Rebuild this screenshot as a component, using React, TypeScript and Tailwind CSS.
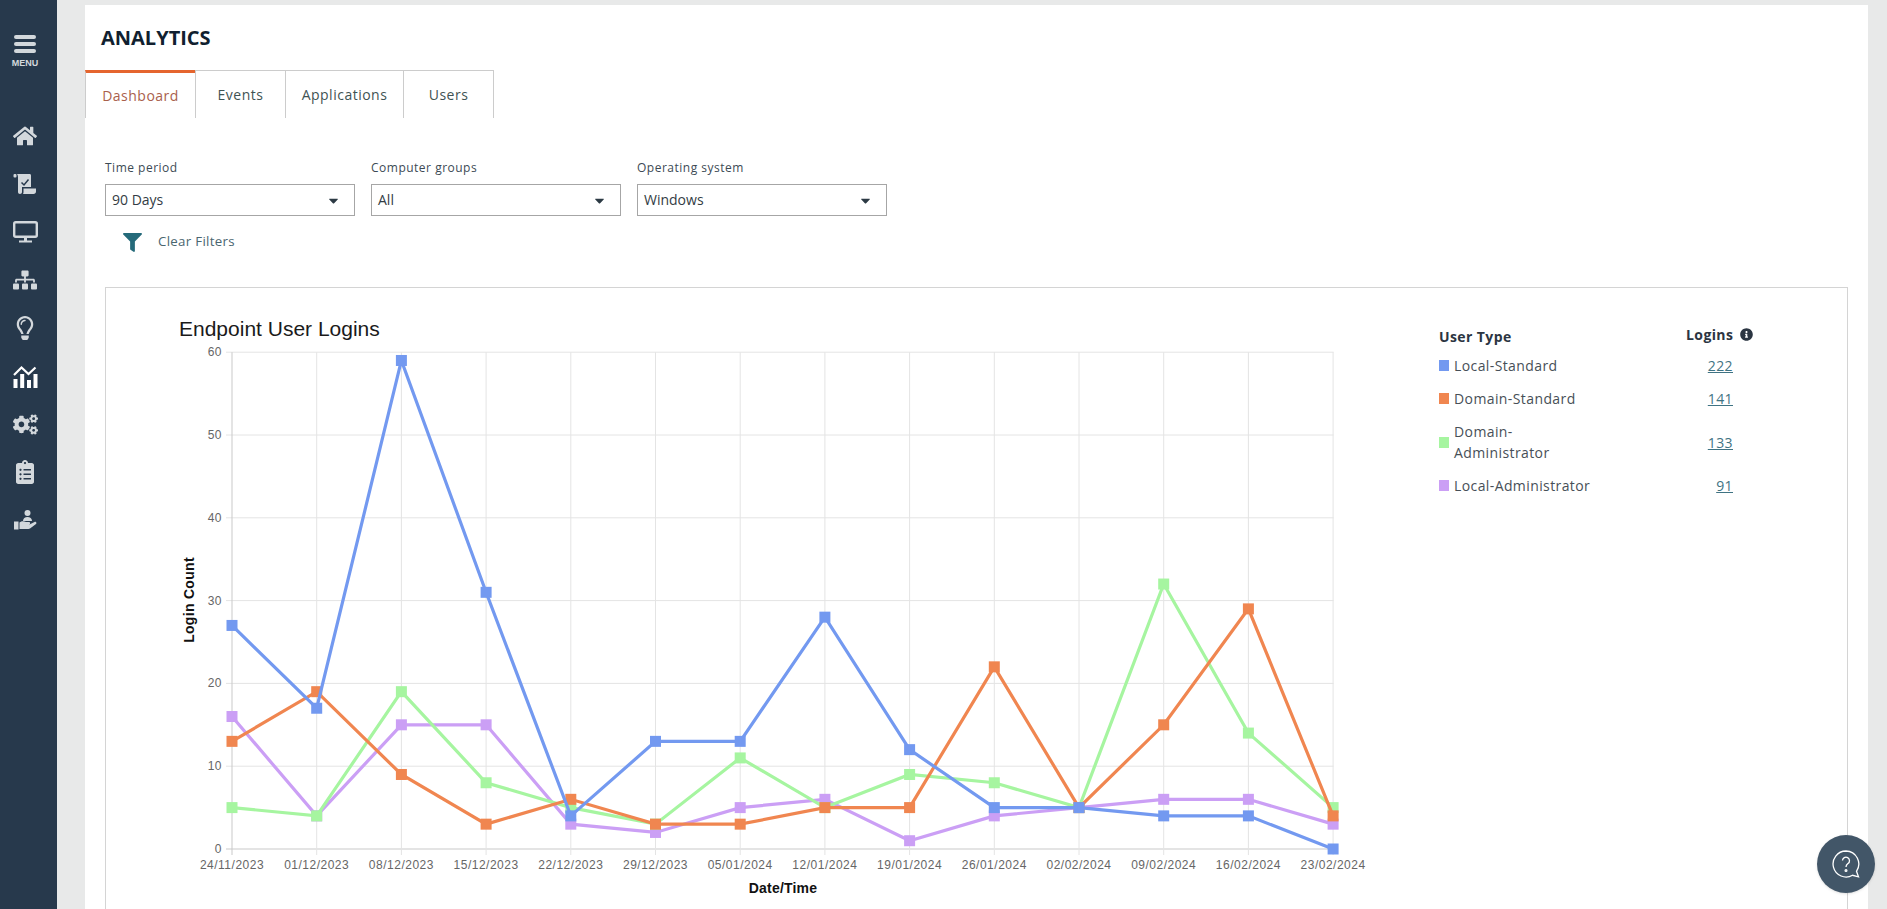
// Analytics dashboard page with the endpoint logins line chart
import type { ReactNode } from 'react'
import {
  FaHome,
  FaSitemap,
  FaRegLightbulb,
  FaCogs,
  FaClipboardList,
  FaFilter,
  FaInfoCircle,
  FaCaretDown,
} from 'react-icons/fa'

const dates = [
  '24/11/2023', '01/12/2023', '08/12/2023', '15/12/2023', '22/12/2023', '29/12/2023', '05/01/2024',
  '12/01/2024', '19/01/2024', '26/01/2024', '02/02/2024', '09/02/2024', '16/02/2024', '23/02/2024',
]

// painted last to first, so the first series ends up on top
const series = [
  { name: 'Local-Standard', color: '#7399f0', total: 222, values: [27, 17, 59, 31, 4, 13, 13, 28, 12, 5, 5, 4, 4, 0] },
  { name: 'Domain-Standard', color: '#f08650', total: 141, values: [13, 19, 9, 3, 6, 3, 3, 5, 5, 22, 5, 15, 29, 4] },
  { name: 'Domain-Administrator', color: '#a6f5a0', total: 133, values: [5, 4, 19, 8, 5, 3, 11, 5, 9, 8, 5, 32, 14, 5] },
  { name: 'Local-Administrator', color: '#cb9ff5', total: 91, values: [16, 4, 15, 15, 3, 2, 5, 6, 1, 4, 5, 6, 6, 3] },
]

const X0 = 232
const XSTEP = 84.7
const Y0 = 850
const YSTEP = 8.28

const px = (i: number) => X0 + i * XSTEP
const py = (v: number) => Y0 - v * YSTEP

function ScrollIcon() {
  return (
    <svg width="24" height="22" viewBox="0 0 24 22" fill="currentColor">
      <rect x="0.500" y="1" width="3" height="3.500" rx="1" />
      <path d="M4 1h12.500c1 0 1.500.7 1.500 1.500V14h-9v5c0 1-.8 2-2 2s-2-1-2-2V5.500C5 4 5 2 4 1z" />
      <path d="M10.500 15.500H23v3c0 1.400-1 2.500-2.500 2.500H10c.4-.6.5-1.300.5-2z" />
      <path d="M8.500 9.500l2.500 2.500 4.500-5.500" fill="none" stroke="#27394c" strokeWidth="1.500" />
    </svg>
  )
}

function MonitorIcon() {
  return (
    <svg width="25" height="22" viewBox="0 0 25 22" fill="none" stroke="currentColor">
      <rect x="1.200" y="1.200" width="22.600" height="14.600" rx="1.500" strokeWidth="2.400" />
      <path d="M12.500 17v3" strokeWidth="3" />
      <path d="M6 20.500h13" strokeWidth="2" />
    </svg>
  )
}

function TrendIcon() {
  return (
    <svg width="25" height="23" viewBox="0 0 25 23" fill="#ffffff">
      <rect x="0.500" y="14" width="4" height="9" />
      <rect x="7.200" y="9" width="4" height="14" />
      <rect x="14" y="15" width="4" height="8" />
      <rect x="20.500" y="9" width="4" height="14" />
      <path d="M1 10l7.500-7.500 7 6.500 7-6.500" fill="none" stroke="#ffffff" strokeWidth="2.200" />
    </svg>
  )
}

function HandUserIcon() {
  return (
    <svg width="23" height="20" viewBox="0 0 23 20" fill="currentColor">
      <circle cx="13.500" cy="3" r="3" />
      <path d="M9 11c0-2.500 2-4 4.500-4s4.500 1.500 4.500 4z" />
      <rect x="0" y="11.500" width="4.500" height="8" />
      <path d="M5.500 12.500c2.500-1.800 4.500-1.300 6.500-.4h3c1.500 0 1.500 2.400 0 2.400h-3.500 4l5-2.500c1.400-.6 2.600 1 1.500 2l-6 4.500c-.5.300-1 .5-1.500.5H5.500z" />
    </svg>
  )
}

const navIcons: ReactNode[] = [
  <FaHome size={24} />,
  <ScrollIcon />,
  <MonitorIcon />,
  <FaSitemap size={24} />,
  <FaRegLightbulb size={24} />,
  <TrendIcon />,
  <FaCogs size={25} />,
  <FaClipboardList size={24} />,
  <HandUserIcon />,
]

function Sidebar() {
  return (
    <aside className="w-[57px] h-full shrink-0 bg-[#27394c] text-[#d3d8dc] flex flex-col items-center pr-[7px]">
      <div className="pt-[35px] flex flex-col items-center">
        <div className="w-[22px] flex flex-col gap-[3.500px]">
          <span className="h-[3.500px] rounded-full bg-[#d3d8dc]" />
          <span className="h-[3.500px] rounded-full bg-[#d3d8dc]" />
          <span className="h-[3.500px] rounded-full bg-[#d3d8dc]" />
        </div>
        <span className="mt-[5px] text-[9px] leading-[10px] font-bold font-['Liberation_Sans',sans-serif]">MENU</span>
      </div>
      <nav className="mt-[44px] flex flex-col items-center">
        {navIcons.map((icon, i) => (
          <div key={i} className="h-[48.100px] flex items-center justify-center">
            {icon}
          </div>
        ))}
      </nav>
    </aside>
  )
}

function Tab({ label, active }: { label: string; active?: boolean }) {
  if (active) {
    return (
      <div className="w-[110px] h-[48px] border-t-[3px] border-t-[#e5652e] border-l border-l-[#cccccc] flex items-center justify-center text-[14px] tracking-[0.5px] text-[#a9604c]">
        {label}
      </div>
    )
  }
  return (
    <div className="h-[48px] border-t border-r border-[#cccccc] flex items-center justify-center text-[14px] tracking-[0.5px] text-[#3f5353]">
      {label}
    </div>
  )
}

function FilterSelect({ label, value }: { label: string; value: string }) {
  return (
    <div className="w-[250px]">
      <div className="h-[20px] mt-[1px] text-[12px] leading-[20px] tracking-[0.5px] text-[#3c4a55]">{label}</div>
      <div className="mt-[6px] h-[32px] border border-[#a6a6a6] pl-[6px] pr-[13px] pb-[2px] flex items-center justify-between text-[14px] text-[#333c44]">
        <span>{value}</span>
        <FaCaretDown size={15} className="text-[#2c3a44] mt-[2px]" />
      </div>
    </div>
  )
}

function LoginChart() {
  return (
    <svg width="1300" height="640" viewBox="106 289 1300 640" className="shrink-0 block font-['Liberation_Sans',sans-serif]">
      <text x="179" y="337" fontSize="21" fill="#1a1a1a">Endpoint User Logins</text>

      {[0, 10, 20, 30, 40, 50, 60].map((v) => (
        <g key={v}>
          <line x1={X0 - 6} x2={px(13) + 0.5} y1={py(v)} y2={py(v)} stroke={v === 0 ? '#c9c9c9' : '#e4e4e4'} />
          <text x={X0 - 10} y={py(v) + 4} fontSize="12" fill="#666666" textAnchor="end" letterSpacing="0.5">{v}</text>
        </g>
      ))}
      {dates.map((d, i) => (
        <g key={d}>
          <line x1={px(i)} x2={px(i)} y1={py(60)} y2={Y0 + 6} stroke={i === 0 ? '#c9c9c9' : '#e4e4e4'} />
          <text x={px(i)} y={Y0 + 20} fontSize="12" fill="#666666" textAnchor="middle" letterSpacing="0.5">{d}</text>
        </g>
      ))}

      <text transform="translate(194 601) rotate(-90)" fontSize="14" fontWeight="700" fill="#111111" textAnchor="middle" letterSpacing="0.3">Login Count</text>
      <text x="783" y="894" fontSize="14" fontWeight="700" fill="#111111" textAnchor="middle" letterSpacing="0.2">Date/Time</text>

      {[...series].reverse().map((s) => (
        <g key={s.name}>
          <polyline
            points={s.values.map((v, i) => `${px(i)},${py(v)}`).join(' ')}
            fill="none"
            stroke={s.color}
            strokeWidth="3.200"
          />
          {s.values.map((v, i) => (
            <rect key={i} x={px(i) - 5.5} y={py(v) - 5.5} width="11" height="11" fill={s.color} />
          ))}
        </g>
      ))}
    </svg>
  )
}

function Legend() {
  return (
    <div className="w-[320px] pt-[37px] text-[14px] tracking-[0.4px]">
      <div className="flex items-center h-[22px] font-bold text-[#2b3542] text-[14px]">
        <span className="w-[247px]">User Type</span>
        <span className="w-[54px] -mt-[3px]">Logins</span>
        <FaInfoCircle size={13} className="-mt-[3px] text-[#2b3542]" />
      </div>
      <div className="mt-[2px]">
        {series.map((s) => (
          <div
            key={s.name}
            className={s.name === 'Domain-Administrator' ? 'flex items-center h-[54px]' : 'flex items-center h-[33px]'}
          >
            <span className="w-[10px] h-[11px] shrink-0" style={{ backgroundColor: s.color }} />
            <span className="w-[150px] ml-[5px] leading-[21px] text-[#474f57]">{s.name}</span>
            <span className="w-[129px] text-right underline text-[#3f7383]">{s.total}</span>
          </div>
        ))}
      </div>
    </div>
  )
}

export default function App() {
  return (
    <div className="w-[1887px] h-[909px] overflow-hidden flex bg-[#e8e9e9] font-['Open_Sans',sans-serif]">
      <Sidebar />
      <main className="w-[1783px] ml-[28px] mt-[5px] h-[904px] bg-white shrink-0">
        <h1 className="pl-[16px] pt-[20px] h-[65px] text-[20px] leading-[26px] font-bold text-[#111f30]">ANALYTICS</h1>
        <div className="flex">
          <Tab label="Dashboard" active />
          <div className="w-[91px] border-l border-[#cccccc]"><Tab label="Events" /></div>
          <div className="w-[118px]"><Tab label="Applications" /></div>
          <div className="w-[90px]"><Tab label="Users" /></div>
        </div>

        <div className="pl-[20px] pr-[20px]">
          <div className="pt-[39px] flex gap-[16px]">
            <FilterSelect label="Time period" value="90 Days" />
            <FilterSelect label="Computer groups" value="All" />
            <FilterSelect label="Operating system" value="Windows" />
          </div>
          <div className="mt-[14px] ml-[18px] h-[24px] flex items-center text-[13.300px] tracking-[0.3px] text-[#4a6670]">
            <FaFilter size={19} className="text-[#256a7a]" />
            <span className="ml-[16px]">Clear Filters</span>
          </div>
          <div className="mt-[33px] h-[700px] border border-[#d4d4d4] flex">
            <LoginChart />
            <div className="ml-[33px]"><Legend /></div>
          </div>
        </div>
      </main>

      <div className="absolute left-[1817px] top-[835px] w-[58px] h-[58px] rounded-full bg-[#425668] flex items-center justify-center shadow-sm">
        <svg width="30" height="30" viewBox="0 0 30 30" fill="none" stroke="#ffffff" strokeWidth="1.300">
          <path d="M15 2a13 13 0 1 0 6.500 24.300l6 1.500-2-5.500A13 13 0 0 0 15 2z" />
          <path d="M11.500 11.500a3.500 3.500 0 1 1 5.500 3c-1.300 1-2 1.500-2 3.500" />
          <circle cx="15" cy="21.500" r="0.900" />
        </svg>
      </div>
    </div>
  )
}
